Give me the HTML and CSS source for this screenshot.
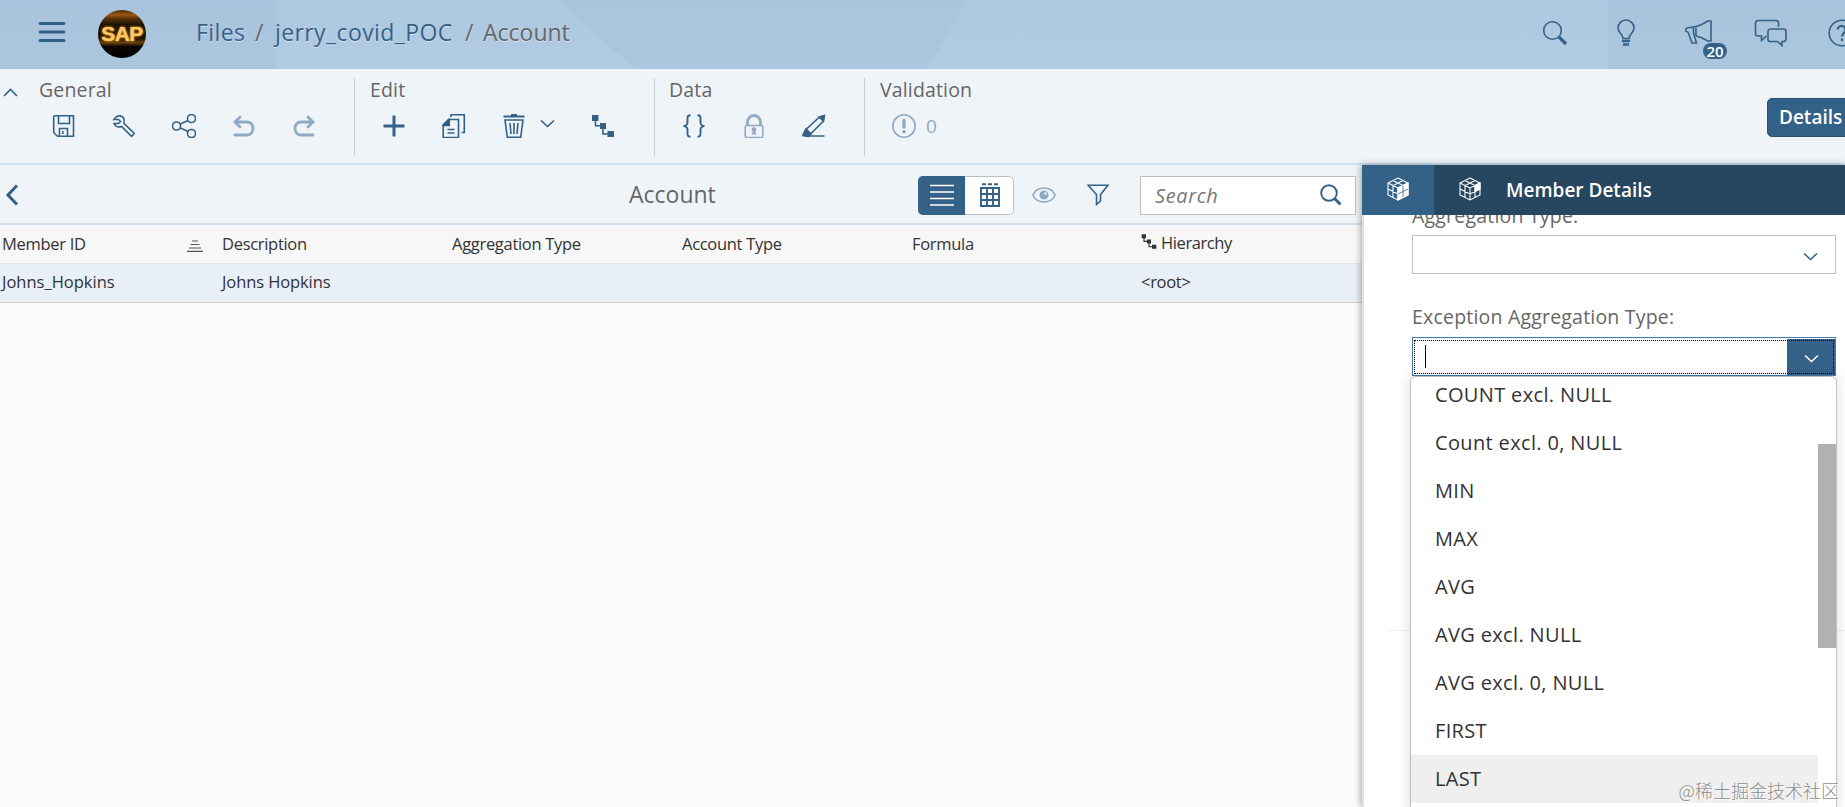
FILE: index.html
```html
<!DOCTYPE html>
<html lang="en">
<head>
	<meta charset="utf-8">
	<title>Account</title>
	<link rel="stylesheet" href="styles.css">
</head>
<body>
	<!-- shell bar -->
	<div class="shell">
		<svg class="facets" width="1845" height="69">
			<path d="M557 0H967L927 69H635z" fill="#a6c3dc" opacity=".6"/>
			<path d="M276 0V69H0V0z" fill="#a6c2dc" opacity=".6"/>
			<path d="M1608 0H1845V69H1608z" fill="#a6c2dc" opacity=".6"/>
		</svg>
		<svg class="menu" width="28" height="22" viewBox="0 0 28 22"><path d="M2 2.500H26M2 11H26M2 19.500H26" stroke="#346187" stroke-width="3" stroke-linecap="round"/></svg>
		<div class="logo"><span>SAP</span></div>
		<div class="crumbs"><a class="c1">Files</a><i class="s1">/</i><a class="c2">jerry_covid_POC</a><i class="s2">/</i><span class="c3">Account</span></div>
		<div class="shellIcons">
			<svg width="26" height="26" viewBox="0 0 26 26"><circle cx="10.500" cy="10.500" r="8.800"/><path d="M17 17L24 24" stroke-width="3.200"/></svg>
			<svg width="20" height="28" viewBox="0 0 20 28"><path d="M7 19.500C7 15 2 14 2 9a8 8 0 0 1 16 0C18 14 13 15 13 19.500z"/><path d="M6 22H14M7 25.500H13" stroke-width="2.600"/></svg>
			<div class="news">
				<svg width="30" height="28" viewBox="0 0 30 28"><path d="M1.500 12c0-2 1-3.500 4-3.500C15 8.500 20 4 24 2h3v20h-3c-4-2-6-4-12-5M1.500 12l2.500 1 4 11h4.500L9.500 14V9M12 9V17"/></svg>
				<b>20</b>
			</div>
			<svg width="34" height="28" viewBox="0 0 34 28"><path d="M12.500 17L7.500 21.500V17H4a2.500 2.500 0 0 1-2.500-2.500V4A2.500 2.500 0 0 1 4 1.500H22A2.500 2.500 0 0 1 24.500 4V8M16 10H29.500a2.500 2.500 0 0 1 2.500 2.500V20a2.500 2.500 0 0 1-2.500 2.500H28V26.500L23.500 22.500H16a2 2 0 0 1-2-2.500V12.500A2.500 2.500 0 0 1 16 10z"/></svg>
			<svg class="help" width="28" height="28" viewBox="0 0 28 28"><circle cx="14" cy="14" r="12.800"/><path d="M9.500 10.500a4 4 0 1 1 6.500 3.500c-1.500 1-2 1.600-2 3.500M14 19.500V22" stroke-width="2.200"/></svg>
		</div>
	</div>

	<!-- ribbon -->
	<div class="ribbon">
		<svg class="fold" width="15" height="9" viewBox="0 0 15 9"><path d="M1 8L7.500 1.500L14 8"/></svg>
		<div class="group general">
			<h3>General</h3>
			<div class="tools">
				<svg viewBox="0 0 24 24"><path d="M2.500 1.700H21.500V22.300H5.500L1.700 18.500V2.500zM6.500 2V9.500H17.500V2M7.500 22V14.500H15.500V22M10.800 17V20"/></svg>
				<svg viewBox="0 0 24 24"><path d="M2 5.500L3.500 3.500C6 1 10 1.500 11.500 4c1 1.800 1 3.500.4 5.200L22.300 19.500 19.500 22.300 9.500 12.500C6.500 13.500 3.500 12.500 2 9.500H6.500L8.500 7.500 6.500 5.500z"/></svg>
				<svg viewBox="0 0 24 24"><circle cx="4.500" cy="12" r="4"/><circle cx="19.500" cy="4.500" r="4"/><circle cx="19.500" cy="19.500" r="4"/><path d="M8 10.300L16 6.500M8 13.700L16 17.500"/></svg>
				<svg class="off arrow" viewBox="0 0 24 24"><path d="M8 3L3 8 8 13M3.500 8H15.500a5.500 6.500 0 0 1 0 13H3"/></svg>
				<svg class="off arrow" viewBox="0 0 24 24"><path d="M16 3L21 8 16 13M20.500 8H8.500a5.500 6.500 0 0 0 0 13H21"/></svg>
			</div>
		</div>
		<div class="group edit">
			<h3>Edit</h3>
			<div class="tools">
				<svg viewBox="0 0 24 24"><path d="M12 1.500V22.500M1.500 12H22.500" stroke-width="3"/></svg>
				<svg viewBox="0 0 24 24"><path d="M6.500 5.500H16.500V23.500H1.200V10.800zM9 3V.7H22.300V18.500H19.500M5.500 15.500H12.500M5.500 19H12.500"/><path d="M1 11.500L7.200 5.500V11.500z" fill="#346187"/></svg>
				<svg viewBox="0 0 24 24"><path d="M1.500 2.500H22.500M9 1H15" stroke-width="2"/><path d="M3 6H21L18.700 23.300H5.300zM8 9L9 20M12 9V20M16 9L15 20"/></svg>
				<svg class="tiny" width="15" height="9" viewBox="0 0 15 9"><path d="M1 1.500L7.500 7.500L14 1.500"/></svg>
				<svg class="tree" viewBox="0 0 24 24"><path d="M4.500 6V11.800H12M12 14V20H18"/><path class="sq" d="M1 1H7.500V7H1zM9 9H15V15H9zM16.500 17H23V23H16.500z"/></svg>
			</div>
		</div>
		<div class="group data">
			<h3>Data</h3>
			<div class="tools">
				<svg viewBox="0 0 24 24"><path d="M8.500 1.200C5.500 1.200 5.500 2.500 5.500 5V8.500C5.500 10.500 3.500 12 1.500 12 3.500 12 5.500 13.500 5.500 15.500V19C5.500 21.500 5.500 22.800 8.500 22.800M15.500 1.200C18.500 1.200 18.500 2.500 18.500 5V8.500C18.500 10.500 20.500 12 22.500 12 20.500 12 18.500 13.500 18.500 15.500V19C18.500 21.500 18.500 22.800 15.500 22.800" stroke-width="1.900"/></svg>
				<svg class="off" viewBox="0 0 24 24"><path d="M5.500 11V8a6.500 6.500 0 0 1 13 0V11" stroke-width="2.800"/><rect x="3.200" y="11.500" width="17.600" height="12" rx="1.500"/><path d="M9.500 20.500H14.500L13.200 17.500a2.300 2.300 0 1 0-2.400 0z" fill="#8faac2" stroke="none"/></svg>
				<svg viewBox="0 0 24 24"><path d="M1.500 20L4 15.500 17 3.500 22 2 21 7.500 8.500 20zM3 22H22.500"/><path d="M1 21.500L4 15 9 20 6.500 22.500zM17 3L22.500 1.500 21.500 7z" fill="#346187"/></svg>
			</div>
		</div>
		<div class="group valid">
			<h3>Validation</h3>
			<div class="tools">
				<svg class="off" viewBox="0 0 24 24"><circle cx="12" cy="12" r="11.200"/><path d="M12 6.500V13" stroke-width="3.400" stroke-linecap="round"/><circle cx="12" cy="17.800" r=".9" stroke-width="1.800"/></svg>
				<span>0</span>
			</div>
		</div>
		<div class="details">Details</div>
	</div>

	<div class="main">
		<div class="left">
			<div class="bar">
				<svg class="back" width="16" height="24" viewBox="0 0 16 24"><path d="M13 2.500L4 12L13 21.500" stroke-width="3"/></svg>
				<h2>Account</h2>
				<div class="seg">
					<div class="on"><svg width="24" height="22" viewBox="0 0 24 22"><path d="M0 1.500H24M0 8H24M0 14.500H24M0 21H24" stroke="#fff"/></svg></div>
					<div><svg width="20" height="24" viewBox="0 0 20 24"><path d="M1 5H19V23H1zM7 5V23M13 5V23M1 11H19M1 17H19M2 1.200H6M8 1.200H12M14 1.200H18" stroke-width="1.900"/></svg></div>
				</div>
				<svg class="eye off" width="24" height="16" viewBox="0 0 24 16"><path d="M.8 8C5-1.300 19-1.300 23.200 8 19 17.300 5 17.300.8 8z"/><circle cx="12" cy="8" r="4.500" fill="#8faac2" stroke="none"/><circle cx="13.500" cy="6.500" r="1.200" fill="#eff4f9" stroke="none"/></svg>
				<svg class="filter" width="22" height="22" viewBox="0 0 22 22"><path d="M1 1.200H21L13.500 10.500V17L9.500 20.500V10.500z"/></svg>
				<div class="search"><em>Search</em><svg width="22" height="22" viewBox="0 0 22 22"><circle cx="9" cy="9" r="7.800" stroke-width="1.900"/><path d="M14.500 14.500L20.500 20.500" stroke-width="3"/></svg></div>
			</div>
			<div class="row head">
				<div>Member ID<svg class="sort" width="16" height="12" viewBox="0 0 16 12"><path d="M5 1H11M3.500 4.500H12.500M2 8H14M0 11.300H16" stroke="#555" stroke-width="1.200"/></svg></div>
				<div>Description</div>
				<div>Aggregation Type</div>
				<div>Account Type</div>
				<div>Formula</div>
				<div class="hier"><svg class="tree dark" width="16" height="17" viewBox="0 0 24 24"><path d="M4.500 6V11.800H12M12 14V20H18"/><path class="sq" d="M1 1H7.500V7H1zM9 9H15V15H9zM16.500 17H23V23H16.500z"/></svg>Hierarchy</div>
			</div>
			<div class="row body">
				<div>Johns_Hopkins</div>
				<div>Johns Hopkins</div>
				<div></div>
				<div></div>
				<div></div>
				<div>&lt;root&gt;</div>
			</div>
		</div>

		<div class="panel">
			<div class="tabs">
				<div class="tab"><svg width="22" height="24" viewBox="0 0 22 24"><path d="M11 1L21 6V18L11 23 1 18V6zM1 6L11 11 21 6M11 11V23M6 3.500L16 8.500V20.500M16 3.500L6 8.500V20.500M1 12L11 17 21 12"/><path d="M11 11L21 6V18L11 23z" fill="#fff"/><path d="M11 17L21 12M16 9V20" stroke="#346187" stroke-width=".8"/></svg></div>
				<svg class="cube" width="22" height="24" viewBox="0 0 22 24"><path d="M11 1L21 6V18L11 23 1 18V6zM1 6L11 11 21 6M11 11V23M6 3.500L16 8.500V20.500M16 3.500L6 8.500V20.500M1 12L11 17 21 12"/><path d="M16 8.500L21 6V12L16 14.500z" fill="#fff"/></svg>
				<b>Member Details</b>
			</div>
			<div class="form">
				<label class="l1">Aggregation Type:</label>
				<div class="select"><svg width="15" height="9" viewBox="0 0 15 9"><path d="M1 1.500L7.500 7.500L14 1.500"/></svg></div>
				<label class="l2">Exception Aggregation Type:</label>
				<div class="select focus"><i class="caret"></i><div class="arrowBox"><svg width="15" height="9" viewBox="0 0 15 9"><path d="M1 1.500L7.500 7.500L14 1.500"/></svg></div></div>
				<div class="line"></div>
				<div class="popup">
					<ul>
						<li>COUNT excl. NULL</li>
						<li>Count excl. 0, NULL</li>
						<li>MIN</li>
						<li>MAX</li>
						<li>AVG</li>
						<li>AVG excl. NULL</li>
						<li>AVG excl. 0, NULL</li>
						<li>FIRST</li>
						<li class="hover">LAST</li>
						<li></li>
					</ul>
					<div class="thumb"></div>
				</div>
			</div>
		</div>
	</div>
	<div class="mark">@稀土掘金技术社区</div>
</body>
</html>
```
FILE: styles.css
```css
* {padding: 0; margin: 0; box-sizing: border-box; list-style: none;}
body {
	width: 1845px;
	height: 807px;
	overflow: hidden;
	position: relative;
	font-family: "Open Sans", "Noto Sans", sans-serif;
	font-size: 19px;
	color: #333;
	background: #fafafa;
}
svg {
	display: block;
	flex: none;
	fill: none;
	stroke: #346187;
	stroke-width: 1.6;
}
i {font-style: normal;}
h2, h3 {font-weight: normal; color: #666;}

/* shell bar */
.shell {
	height: 69px;
	display: flex;
	align-items: center;
	position: relative;
	background: linear-gradient(#adc8e0, #b1cbe2);
}
.facets {
	position: absolute;
	left: 0;
	top: 0;
	stroke: none;
}
.menu {margin: -5px 0 0 38px; position: relative;}
.logo {
	width: 48px;
	height: 48px;
	margin-left: 32px;
	margin-top: -1px;
	border-radius: 50%;
	overflow: hidden;
	position: relative;
	background: linear-gradient(#4a2a08 0, #9a5a12 10%, #5a3208 18%, #1c1208 30%, #1c1206 60%, #6a420c 68%, #0c0602 76%, #000 100%);
	display: flex;
	align-items: center;
	justify-content: center;
}
.logo span {
	font: bold 21px/48px "Liberation Sans", sans-serif;
	letter-spacing: -.5px;
	color: #f8c86c;
	text-shadow: 0 0 3px #f90, 0 0 1px #ffd873;
}
.crumbs {
	margin-left: 50px;
	margin-top: -5px;
	font-size: 23px;
	display: flex;
	color: #666;
	position: relative;
	white-space: nowrap;
	text-shadow: 0 1px 0 rgba(255, 255, 255, .5);
}
.crumbs a {color: #346187; letter-spacing: .4px;}
.c1 {width: 59px;}
.s1 {width: 20px;}
.c2 {width: 190px;}
.s2 {width: 18px;}
.shellIcons {
	position: relative;
	margin-left: auto;
	margin-right: -11px;
	margin-top: -3px;
	display: flex;
	align-items: center;
}
.shellIcons svg:nth-child(2) {margin-left: 48px;}
.news {position: relative; margin: 0 40px 0 48px;}
.news b {
	position: absolute;
	left: 19px;
	top: 24px;
	width: 24px;
	height: 16px;
	border-radius: 8px;
	background: #346187;
	color: #fff;
	font: 600 15px/16px "Open Sans", sans-serif;
	text-align: center;
}
.help {margin-left: 40px;}

/* ribbon */
.ribbon {
	height: 96px;
	padding-top: 9px;
	display: flex;
	align-items: flex-start;
	background: #eff4f9;
	border-bottom: 2px solid #d1e2f0;
}
.fold {margin: 10px 0 0 3px;}
.group {height: 78px; padding-left: 15px;}
.group + .group {border-left: 1px solid #c5cdd4;}
.group h3 {font-size: 19.5px; line-height: 24px; letter-spacing: .15px;}
.general {width: 336px; padding-left: 21px;}
.edit {width: 300px;}
.data {width: 210px; padding-left: 14px;}
.valid {width: 200px;}
.tools {
	display: flex;
	align-items: center;
	height: 24px;
	margin-top: 12px;
	padding-left: 12px;
	gap: 36px;
}
.general .tools, .data .tools {padding-left: 13px;}
.tools svg {width: 24px; height: 24px;}
.tools .tiny {width: 15px; height: 9px; margin: -5px 0 0 -22px;}
.tools span {color: #8faac2; margin-left: -26px;}
.off {stroke: #8faac2;}
.arrow {stroke-width: 2.800; stroke-linecap: round;}
.sq {fill: #346187; stroke: none;}
.details {
	margin: 20px -20px 0 auto;
	width: 98px;
	height: 39px;
	padding-left: 11px;
	line-height: 37px;
	border-radius: 5px;
	border: 1px solid #27506f;
	background: #346187;
	color: #fff;
	font-weight: 600;
}

/* table side */
.main {display: flex; height: 642px;}
.left {width: 1362px;}
.bar {
	height: 60px;
	padding-top: 2px;
	display: flex;
	align-items: center;
	background: #eff4f9;
	border-bottom: 2px solid #d1e0ec;
}
.back {margin: 0 0 0 4px;}
.bar h2 {font-size: 23px; width: 120px; margin: -2px 0 0 609px;}
.seg {
	width: 96px;
	height: 39px;
	margin-left: 169px;
	display: flex;
	border: 1px solid #bfbfbf;
	border-radius: 5px;
	background: #fff;
}
.seg div {flex: 1; display: flex; align-items: center; justify-content: center; padding-left: 1px;}
.seg .on {
	margin: -1px 0 -1px -1px;
	padding-left: 0;
	background: #346187;
	border-radius: 5px 0 0 5px;
}
.eye {margin-left: 18px;}
.filter {margin-left: 31px;}
.search {
	width: 216px;
	height: 39px;
	margin-left: 31px;
	padding: 0 13px 0 14px;
	display: flex;
	align-items: center;
	justify-content: space-between;
	border: 1px solid #bfbfbf;
	background: #fff;
	color: #777;
}
.search em {font-size: 20px; letter-spacing: .6px;}
.row {
	display: grid;
	grid-template-columns: 219px 230px 230px 230px 230px 221px;
	height: 39px;
	line-height: 36px;
	font-size: 16.5px;
	white-space: nowrap;
}
.row div {padding-left: 3px;}
.head {background: #f7f7f7; border-bottom: 1px solid #e5e5e5; letter-spacing: -.3px;}
.head div {display: flex; align-items: center; padding: 0 0 4px 3px;}
.body {background: #e8eff6; border-bottom: 1px solid #ccc; letter-spacing: -.1px;}
.body div:first-child {padding-left: 2px; letter-spacing: 0;}
.body div:last-child {padding-left: 2px; letter-spacing: -.3px;}
.head div:first-child {padding-left: 2px;}
.sort {margin: 4px 16px 0 auto;}
.dark {stroke: #333; margin: -4px 4px 0 0;}
.dark .sq {fill: #333;}
.head .hier {padding: 0 0 6px 2px; letter-spacing: -.4px;}

/* detail panel */
.panel {
	width: 483px;
	position: relative;
	background: #fff;
	border-left: 2px solid #e0e0e0;
	box-shadow: -1px 0 7px rgba(0, 0, 0, .35);
}
.tabs {
	height: 50px;
	margin-left: -2px;
	display: flex;
	align-items: center;
	position: relative;
	z-index: 2;
	background: #27465f;
	color: #fff;
}
.tabs svg {stroke: #fff; stroke-width: 1.100; margin-top: -2px;}
.tab {
	width: 72px;
	height: 50px;
	display: flex;
	align-items: center;
	justify-content: center;
	background: #346187;
}
.cube {margin-left: 25px;}
.tabs b {font-weight: 600; margin-left: 25px;}
.form {display: flow-root; padding-left: 48px; color: #666; position: relative;}
.form label {display: block; height: 26px; line-height: 26px; font-size: 19.5px; letter-spacing: .2px;}
.l1 {margin-top: -12px;}
.l2 {margin-top: 30px;}
.select {
	width: 424px;
	height: 39px;
	margin-top: 6px;
	padding: 4px 17px 0 0;
	display: flex;
	align-items: center;
	justify-content: flex-end;
	border: 1px solid #bfbfbf;
}
.focus {
	margin-top: 7px;
	justify-content: space-between;
	padding: 1px 0 0 1px;
	border-color: #427cac;
	position: relative;
}
.focus:after {
	content: "";
	position: absolute;
	left: 1px;
	top: 2px;
	right: 1px;
	bottom: 1px;
	border: 1px dotted #000;
}
.caret {width: 1px; height: 23px; margin: -1px 0 0 11px; background: #000;}
.arrowBox {
	width: 48px;
	height: 36px;
	padding-top: 2px;
	display: flex;
	align-items: center;
	justify-content: center;
	background: #346187;
}
.arrowBox svg {stroke: #fff;}
.line {height: 1px; margin: 254px 0 0 -24px; background: #eee;}
.popup {
	position: absolute;
	left: 46px;
	top: 161px;
	width: 427px;
	height: 440px;
	overflow: hidden;
	background: #fff;
	border: 1px solid #c0c0c0;
	border-radius: 6px;
	box-shadow: 0 0 14px rgba(0, 0, 0, .14);
	color: #333;
	font-size: 20px;
	letter-spacing: .35px;
}
.popup ul {width: 407px; margin-top: -6px;}
.popup li {height: 48px; line-height: 48px; padding-left: 24px;}
.popup .hover {background: #efefef;}
.thumb {
	position: absolute;
	right: 0;
	top: 67px;
	width: 18px;
	height: 204px;
	background: #b1b1b1;
}

.mark {
	position: absolute;
	right: 6px;
	bottom: 4px;
	font: 300 18px/26px "Noto Sans CJK SC", sans-serif;
	color: rgba(110, 110, 110, .8);
	text-shadow: 1px 1px 0 rgba(255, 255, 255, .7);
	z-index: 5;
}
```
